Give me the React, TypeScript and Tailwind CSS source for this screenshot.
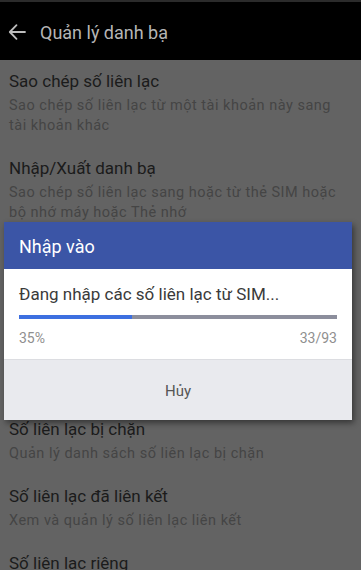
const items = [
  {
    title: "Sao chép số liên lạc",
    sub: "Sao chép số liên lạc từ một tài khoản này sang tài khoản khác",
  },
  {
    title: "Nhập/Xuất danh bạ",
    sub: "Sao chép số liên lạc sang hoặc từ thẻ SIM hoặc bộ nhớ máy hoặc Thẻ nhớ",
  },
  {
    title: "Chia sẻ danh bạ",
    sub: "Chia sẻ số liên lạc qua tin nhắn, email hoặc các ứng dụng khác",
  },
  {
    title: "Xóa số liên lạc",
    sub: "Xóa nhiều số liên lạc khỏi danh bạ của bạn cùng một lúc",
  },
  {
    title: "Số liên lạc bị chặn",
    sub: "Quản lý danh sách số liên lạc bị chặn",
  },
  {
    title: "Số liên lạc đã liên kết",
    sub: "Xem và quản lý số liên lạc liên kết",
  },
  {
    title: "Số liên lạc riêng",
    sub: "Quản lý số liên lạc riêng tư",
  },
];

function ArrowLeft() {
  return (
    <svg width="18" height="18" viewBox="0 0 18 18" fill="none" className="text-[#bdbdbd]">
      <path d="M17 9H2M8.5 2.2 1.8 9l6.7 6.8" stroke="currentColor" strokeWidth="1.8" strokeLinecap="round" strokeLinejoin="round" />
    </svg>
  );
}

function ImportDialog({ done, total }: { done: number; total: number }) {
  const pct = Math.round((done / total) * 100);
  return (
    <div className="absolute left-[4px] top-[222px] w-[348px] shadow-[2px_3px_6px_rgba(0,0,0,0.45)]">
      <div className="flex h-[47px] items-center bg-[#3b55a6] px-[15px] pt-[1px] text-[18px] text-white">Nhập vào</div>
      <div className="bg-white px-[15px] pb-[11px] pt-[13px]">
        <div className="text-[17px] leading-[24px] text-[#3a3a3a]">Đang nhập các số liên lạc từ SIM...</div>
        <div className="mt-[9px] h-[4px] w-[318px] bg-[#8c8e9c]">
          <div className="h-full bg-[#3d6fe0]" style={{ width: `${(done / total) * 100}%` }} />
        </div>
        <div className="mt-[9px] flex w-[318px] justify-between text-[14px] leading-[20px] text-[#8f8f8f]">
          <span>{pct}%</span>
          <span>
            {done}/{total}
          </span>
        </div>
      </div>
      <div className="flex h-[61px] items-center justify-center border-t border-[#dcdde1] bg-[#e9eaee] pt-[2px] text-[15px] text-[#555]">
        Hủy
      </div>
    </div>
  );
}

export default function App() {
  return (
    <div className="relative h-[570px] w-[361px] overflow-hidden bg-[#636363] font-['Roboto','Noto_Sans',sans-serif]">
      <div className="h-[2px] bg-[#2b2b2b]" />
      <div className="flex h-[58px] items-center gap-[14px] bg-black pl-[8px] pt-[2px]">
        <ArrowLeft />
        <span className="text-[18px] text-[#b5b5b5]">Quản lý danh bạ</span>
      </div>
      <div className="px-[9px]">
        {items.map((it) => (
          <div key={it.title} className="pb-[11px] pt-[9px]">
            <div className="text-[17px] leading-[24px] text-[#1b1b1b]">{it.title}</div>
            <div className="mt-[3px] w-[330px] text-[14.5px] leading-[20px] tracking-[0.5px] text-[#454545]">{it.sub}</div>
          </div>
        ))}
      </div>
      <ImportDialog done={33} total={93} />
    </div>
  );
}
